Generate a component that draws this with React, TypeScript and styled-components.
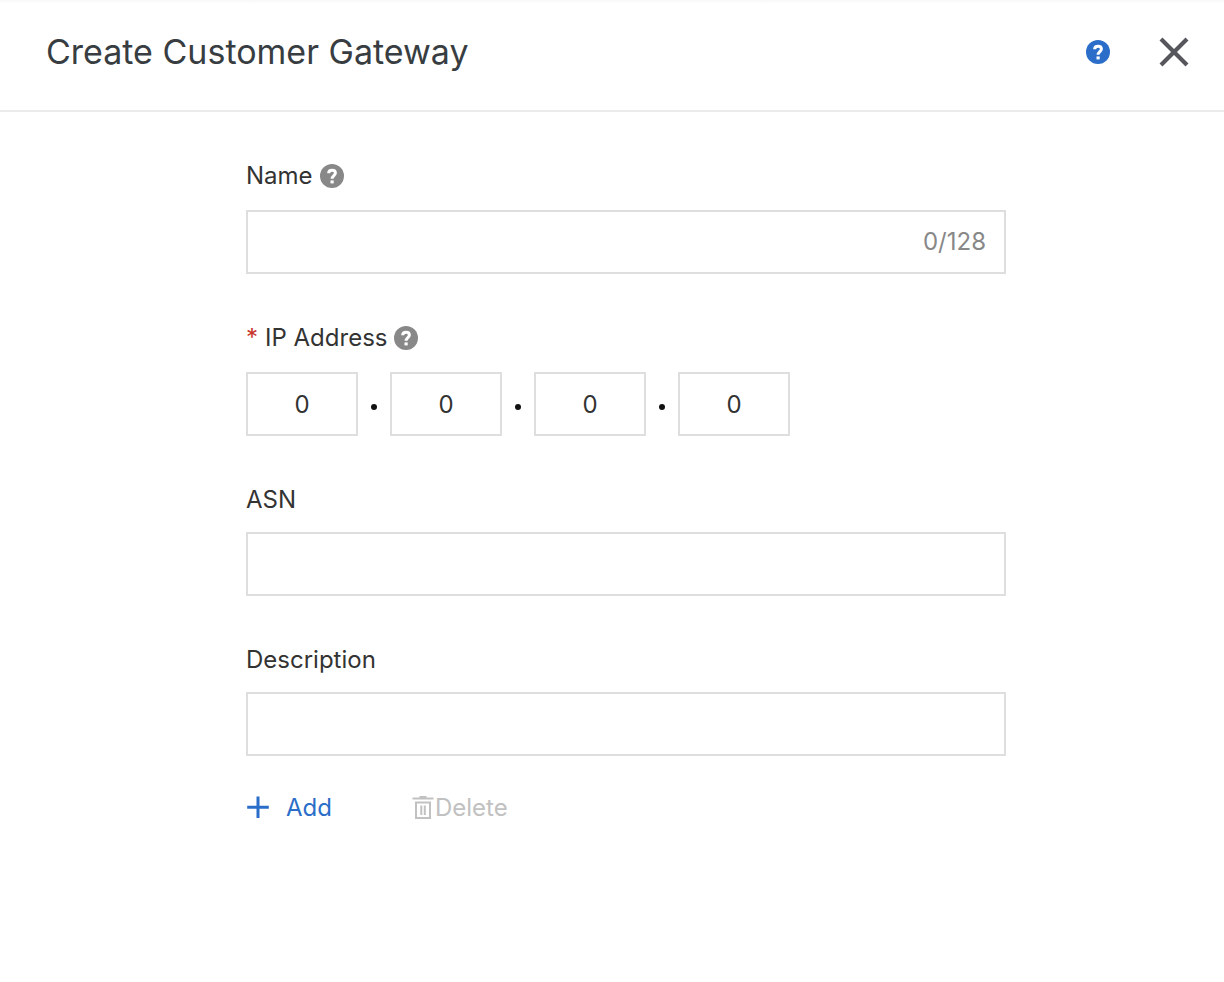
import React, { useState } from "react";
import styled, { createGlobalStyle } from "styled-components";

const GlobalStyle = createGlobalStyle`
  *, *::before, *::after { box-sizing: border-box; }
  body {
    margin: 0;
    background: #fff;
    color: #333;
    font-family: Inter, "Liberation Sans", sans-serif;
    font-size: 24px;
    line-height: 32px;
  }
  button, input { font: inherit; color: inherit; }
`;

const Panel = styled.main`
  min-height: 100vh;
  background: #fff linear-gradient(#f8f8f8, #fff) no-repeat 0 0 / 100% 4px;
`;

const Header = styled.header`
  display: flex;
  align-items: center;
  justify-content: space-between;
  padding: 28px 32px 34px 46px;
  border-bottom: 2px solid #ebebeb;
  background: transparent;
`;

const Title = styled.h1`
  margin: 0;
  color: #373d41;
  font-size: 34px;
  font-weight: 400;
  line-height: 48px;
`;

const HeaderActions = styled.div`
  display: flex;
  align-items: center;
  gap: 46px;
`;

const IconButton = styled.button`
  display: flex;
  flex: none;
  padding: 0;
  border: 0;
  background: none;
  cursor: pointer;
`;

const Form = styled.form`
  padding: 0 218px 48px 246px;
`;

const Field = styled.div`
  padding-top: 48px;
`;

const LabelRow = styled.div<{ $help?: boolean }>`
  display: flex;
  align-items: center;
  gap: 7px;
  margin-bottom: ${(p) => (p.$help ? 18 : 16)}px;
`;

const Required = styled.span`
  color: #c8352b;
`;

const InputBox = styled.div`
  display: flex;
  align-items: center;
  height: 64px;
  padding: 0 18px;
  border: 2px solid #dedede;
  background: #fff;
  &:focus-within { border-color: #2a6ec9; }
`;

const TextInput = styled.input`
  flex: 1;
  min-width: 0;
  padding: 0;
  border: 0;
  outline: 0;
  background: none;
`;

const Counter = styled.span`
  color: #888;
`;

const Octets = styled.div`
  display: flex;
  align-items: center;
`;

const OctetInput = styled.input`
  width: 112px;
  height: 64px;
  padding: 0;
  border: 2px solid #dedede;
  outline: 0;
  background: #fff;
  text-align: center;
  &:focus { border-color: #2a6ec9; }
`;

const Dot = styled.span`
  width: 6px;
  height: 6px;
  margin: 6px 13px 0;
  border-radius: 50%;
  background: #111;
`;

const Actions = styled.div`
  display: flex;
  gap: 80px;
  padding-top: 36px;
`;

const LinkButton = styled.button<{ $gap: number }>`
  display: flex;
  align-items: center;
  gap: ${(p) => p.$gap}px;
  padding: 0;
  border: 0;
  background: none;
  color: #2a6ec9;
  cursor: pointer;
  &:disabled { color: #c1c1c1; cursor: not-allowed; }
`;

const HelpIcon = ({ color }: { color: string }) => (
  <svg width="24" height="24" viewBox="0 0 24 24" fill="none" aria-hidden="true">
    <circle cx="12" cy="12" r="12" fill={color} />
    <path
      d="M8.6 9.3C8.7 7.3 10 6.3 12.1 6.3s3.3 1.1 3.3 2.8c0 2.4-3.3 2.7-3.3 5.7"
      stroke="#fff"
      strokeWidth="3"
    />
    <path d="M10.5 16.4h3.2v3h-3.2z" fill="#fff" />
  </svg>
);

const CloseIcon = () => (
  <svg width="36" height="36" viewBox="0 0 36 36" fill="none" aria-hidden="true">
    <path d="M5 5l26 26M31 5L5 31" stroke="#55575c" strokeWidth="4.2" />
  </svg>
);

const PlusIcon = () => (
  <svg width="24" height="24" viewBox="0 0 24 24" fill="none" aria-hidden="true">
    <path d="M12 0.5v21.5M1.2 11.2h21.6" stroke="currentColor" strokeWidth="3" />
  </svg>
);

const TrashIcon = () => (
  <svg width="22" height="24" viewBox="0 0 22 24" fill="none" aria-hidden="true">
    <path
      d="M0.5 2.5h21M7.5 0.8h7M4 6.5h14v15.5H4zM9.3 9.5v9.5M12.8 9.5v9.5"
      stroke="currentColor"
      strokeWidth="2"
    />
  </svg>
);

export default function App() {
  const [name, setName] = useState("");
  const [octets, setOctets] = useState(["0", "0", "0", "0"]);
  const [descriptions, setDescriptions] = useState([""]);

  return (
    <>
      <GlobalStyle />
      <Panel>
        <Header>
          <Title>Create Customer Gateway</Title>
          <HeaderActions>
            <IconButton type="button" aria-label="Help">
              <HelpIcon color="#2a6ec9" />
            </IconButton>
            <IconButton type="button" aria-label="Close">
              <CloseIcon />
            </IconButton>
          </HeaderActions>
        </Header>

        <Form onSubmit={(e) => e.preventDefault()}>
          <Field>
            <LabelRow $help>
              <label htmlFor="name">Name</label>
              <IconButton type="button" aria-label="About the name">
                <HelpIcon color="#888" />
              </IconButton>
            </LabelRow>
            <InputBox>
              <TextInput
                id="name"
                maxLength={128}
                value={name}
                onChange={(e) => setName(e.target.value)}
              />
              <Counter>{name.length}/128</Counter>
            </InputBox>
          </Field>

          <Field>
            <LabelRow $help>
              <Required>*</Required>
              <label htmlFor="octet-0">IP Address</label>
              <IconButton type="button" aria-label="About the IP address">
                <HelpIcon color="#888" />
              </IconButton>
            </LabelRow>
            <Octets>
              {octets.map((octet, i) => (
                <React.Fragment key={i}>
                  {i > 0 && <Dot />}
                  <OctetInput
                    id={`octet-${i}`}
                    aria-label={`IP address part ${i + 1}`}
                    inputMode="numeric"
                    value={octet}
                    onChange={(e) =>
                      setOctets(octets.map((o, j) => (j === i ? e.target.value : o)))
                    }
                  />
                </React.Fragment>
              ))}
            </Octets>
          </Field>

          <Field>
            <LabelRow>
              <label htmlFor="asn">ASN</label>
            </LabelRow>
            <InputBox>
              <TextInput id="asn" />
            </InputBox>
          </Field>

          {descriptions.map((text, i) => (
            <Field key={i}>
              <LabelRow>
                <label htmlFor={`description-${i}`}>Description</label>
              </LabelRow>
              <InputBox>
                <TextInput
                  id={`description-${i}`}
                  value={text}
                  onChange={(e) =>
                    setDescriptions(
                      descriptions.map((d, j) => (j === i ? e.target.value : d))
                    )
                  }
                />
              </InputBox>
            </Field>
          ))}

          <Actions>
            <LinkButton
              type="button"
              $gap={16}
              onClick={() => setDescriptions([...descriptions, ""])}
            >
              <PlusIcon />
              Add
            </LinkButton>
            <LinkButton
              type="button"
              $gap={1}
              disabled={descriptions.length === 1}
              onClick={() => setDescriptions(descriptions.slice(0, -1))}
            >
              <TrashIcon />
              Delete
            </LinkButton>
          </Actions>
        </Form>
      </Panel>
    </>
  );
}
